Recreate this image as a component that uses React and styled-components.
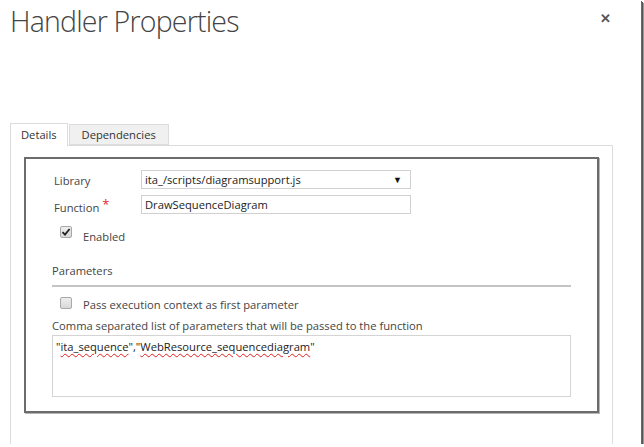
import React from "react";
import styled, { createGlobalStyle } from "styled-components";

const GlobalStyle = createGlobalStyle`
  * { box-sizing: border-box; }
  body {
    margin: 0;
    background: #ffffff;
    font-family: "Open Sans", "Noto Sans", "Liberation Sans", sans-serif;
  }
`;

const App = () => {
  return (
    <>
      <GlobalStyle />
      <Page>
        <Header>
          <Title>Handler Properties</Title>
          <Close>✕</Close>
        </Header>

        <Tabs>
          <Tab active>Details</Tab>
          <Tab>Dependencies</Tab>
        </Tabs>

        <Panel>
          <Box>
            <Row>
              <Label>Library</Label>
              <Select>
                <span>ita_/scripts/diagramsupport.js</span>
                <Arrow>▼</Arrow>
              </Select>
            </Row>
            <Row>
              <Label low>
                Function<Req>*</Req>
              </Label>
              <Field>DrawSequenceDiagram</Field>
            </Row>
            <CheckRow top={12} drop={3}>
              <Check checked />
              <CheckText>Enabled</CheckText>
            </CheckRow>

            <Section>Parameters</Section>
            <CheckRow top={16} drop={0}>
              <Check />
              <CheckText>Pass execution context as first parameter</CheckText>
            </CheckRow>
            <Hint>Comma separated list of parameters that will be passed to the function</Hint>
            <TextArea>
              "<Typo>ita_sequence</Typo>","<Typo>WebResource_sequencediagram</Typo>"
            </TextArea>
          </Box>
        </Panel>
      </Page>
    </>
  );
};

const Check = ({ checked }) => (
  <CheckBox>
    {checked && (
      <svg width="10" height="10" viewBox="0 0 10 10">
        <path d="M1.5 5.2 L4 7.6 L8.6 2" fill="none" stroke="#222" strokeWidth="1.8" />
      </svg>
    )}
  </CheckBox>
);

const Page = styled.div`
  width: 641px;
  height: 444px;
  background: #fff;
  overflow: hidden;
  box-shadow: 1px 1px 0 #6a6a6a, 2px 2px 0 #555, 3px 3px 1px #999;
  display: flex;
  flex-direction: column;
  font-size: 11.2px;
  line-height: 16px;
`;

const Header = styled.div`
  height: 122px;
  display: flex;
  justify-content: space-between;
  align-items: flex-start;
  padding: 0 30px 0 10px;
`;

const Title = styled.div`
  font-size: 28.5px;
  font-weight: 300;
  letter-spacing: -0.8px;
  color: #444;
  line-height: 40px;
  margin-top: 1px;
`;

const Close = styled.div`
  font-size: 13px;
  font-weight: 700;
  color: #555;
  line-height: 16px;
  margin-top: 10px;
`;

const Tabs = styled.div`
  display: flex;
  align-items: flex-end;
  padding-left: 10px;
  height: 23px;
`;

const Tab = styled.div`
  height: ${(p) => (p.active ? "23px" : "21px")};
  padding: 0 ${(p) => (p.active ? "10px" : "12px")};
  margin-right: 1px;
  color: #333;
  display: flex;
  align-items: center;
  background: ${(p) => (p.active ? "#fff" : "#f0f0f0")};
  border: 1px solid #dcdcdc;
  border-bottom: ${(p) => (p.active ? "none" : "1px solid #dcdcdc")};
  margin-bottom: ${(p) => (p.active ? "-1px" : "0")};
  position: relative;
  z-index: 1;
`;

const Panel = styled.div`
  width: 603px;
  margin-left: 10px;
  flex: 1;
  border: 1px solid #dcdcdc;
  border-bottom: none;
  padding: 11px 13px 0 13px;
`;

const Box = styled.div`
  height: 256px;
  border: 2px solid #6c6c6c;
  box-shadow: 1px 1px 0 #b5b5b5;
  padding: 11px 26px 0 26px;
  display: flex;
  flex-direction: column;
`;

const Row = styled.div`
  display: flex;
  align-items: center;
  height: 19px;
  margin-bottom: 6px;
  padding-left: 2px;
`;

const Label = styled.div`
  width: 87px;
  color: #444;
  position: relative;
  top: ${(p) => (p.low ? "3px" : "1px")};
`;

const Req = styled.span`
  color: #e0282e;
  font-size: 13px;
  margin-left: 3px;
  position: relative;
  top: -3px;
`;

const Select = styled.div`
  width: 270px;
  height: 19px;
  border: 1px solid #d0d0d0;
  display: flex;
  align-items: center;
  justify-content: space-between;
  padding: 0 8px 0 3px;
  color: #222;
`;

const Arrow = styled.span`
  font-size: 9px;
  color: #111;
`;

const Field = styled.div`
  width: 270px;
  height: 19px;
  border: 1px solid #d0d0d0;
  display: flex;
  align-items: center;
  padding: 0 3px;
  color: #222;
`;

const CheckRow = styled.div`
  display: flex;
  align-items: flex-start;
  margin-top: ${(p) => p.top - 6}px;
  padding-left: 8px;

  & > div:last-child {
    margin-top: ${(p) => p.drop}px;
  }
`;

const CheckBox = styled.div`
  width: 12px;
  height: 12px;
  border: 1px solid #a8a8a8;
  border-radius: 2px;
  background: linear-gradient(#eee, #d8d8d8);
  display: flex;
  align-items: center;
  justify-content: center;
`;

const CheckText = styled.div`
  margin-left: 11px;
  color: #444;
`;

const Section = styled.div`
  margin-top: 18px;
  color: #444;
  padding-bottom: 6px;
  border-bottom: 2px solid #c4c4c4;
  width: 519px;
`;

const Hint = styled.div`
  margin-top: 5px;
  color: #444;
`;

const TextArea = styled.div`
  width: 519px;
  height: 62px;
  border: 1px solid #d4d4d4;
  margin-top: 1px;
  padding: 3px 3px;
  color: #222;
`;

const Typo = styled.span`
  text-decoration: underline wavy #e02020;
  text-decoration-thickness: 1px;
  text-underline-offset: 2px;
`;

export default App;
